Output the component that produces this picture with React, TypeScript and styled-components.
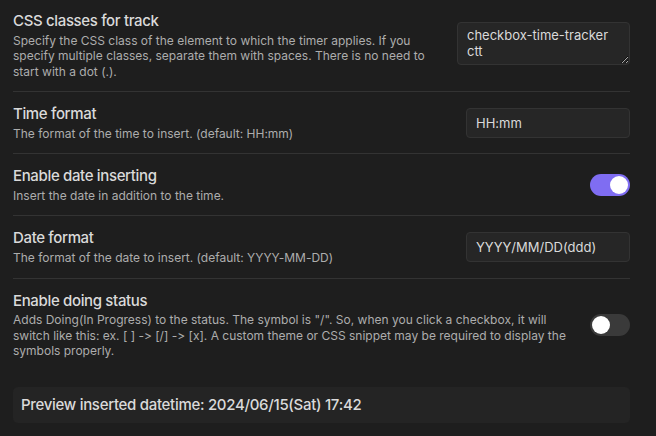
import React from "react";
import styled, { createGlobalStyle } from "styled-components";

const Global = createGlobalStyle`
  html, body { margin: 0; padding: 0; background: #1e1e1e; }
  body {
    font-family: Inter, "Noto Sans", sans-serif;
    -webkit-font-smoothing: antialiased;
    font-variant-ligatures: none;
    font-feature-settings: "calt" 0, "liga" 0;
  }
  * { box-sizing: border-box; }
`;

const Page = styled.div`
  width: 656px;
  height: 436px;
  overflow: hidden;
  background: #1e1e1e;
  padding: 0 26px 0 13px;
  color: #dadada;
`;

const Item = styled.div<{ $first?: boolean }>`
  display: flex;
  align-items: center;
  padding: ${(p) => (p.$first ? "11px 0 12px" : "12px 0")};
  border-top: ${(p) => (p.$first ? "none" : "1px solid #333333")};
`;

const Info = styled.div`
  flex: 1 1 auto;
  min-width: 0;
  margin-right: 16px;
`;

const Name = styled.div`
  font-size: 15px;
  line-height: 19.5px;
  font-weight: 500;
  letter-spacing: -0.35px;
  color: #dadada;
`;

const Desc = styled.div`
  font-size: 12px;
  line-height: 15.6px;
  padding-top: 2px;
  color: #adadad;
`;

const Control = styled.div`
  flex: 0 0 auto;
  display: flex;
  justify-content: flex-end;
`;

const TextArea = styled.textarea`
  width: 173px;
  height: 43px;
  margin-bottom: 4px;
  padding: 4px 9px;
  border: 1px solid #333333;
  border-radius: 4px;
  background: #262626;
  color: #dadada;
  font-family: Inter, "Noto Sans", sans-serif;
  font-size: 13px;
  line-height: 16.5px;
  resize: both;
  outline: none;
  overflow: hidden;
`;

const TextInput = styled.input`
  width: 164px;
  height: 30px;
  padding: 0 9px;
  border: 1px solid #333333;
  border-radius: 4px;
  background: #262626;
  color: #dadada;
  font-family: Inter, "Noto Sans", sans-serif;
  font-size: 13px;
  outline: none;
`;

const Toggle = styled.div<{ $on?: boolean }>`
  position: relative;
  width: 40px;
  height: 22px;
  border-radius: 11px;
  background: ${(p) => (p.$on ? "#7f6df2" : "#3a3a3a")};
  flex: none;
  &::after {
    content: "";
    position: absolute;
    top: 2px;
    left: ${(p) => (p.$on ? "20px" : "2px")};
    width: 18px;
    height: 18px;
    border-radius: 50%;
    background: #ffffff;
  }
`;

const Preview = styled.div`
  margin-top: 16px;
  height: 36px;
  display: flex;
  align-items: center;
  padding: 0 8px;
  background: #242424;
  border-radius: 5px;
  font-size: 15px;
  font-weight: 500;
  letter-spacing: -0.3px;
  color: #dadada;
`;

export default function App() {
  return (
    <>
      <Global />
      <Page>
        <Item $first>
          <Info>
            <Name>CSS classes for track</Name>
            <Desc>
              Specify the CSS class of the element to which the timer applies. If you specify multiple classes,
              separate them with spaces. There is no need to start with a dot (.).
            </Desc>
          </Info>
          <Control>
            <TextArea defaultValue={"checkbox-time-tracker ctt"} spellCheck={false} />
          </Control>
        </Item>
        <Item>
          <Info>
            <Name>Time format</Name>
            <Desc>The format of the time to insert. (default: HH:mm)</Desc>
          </Info>
          <Control>
            <TextInput defaultValue="HH:mm" />
          </Control>
        </Item>
        <Item>
          <Info>
            <Name>Enable date inserting</Name>
            <Desc>Insert the date in addition to the time.</Desc>
          </Info>
          <Control>
            <Toggle $on />
          </Control>
        </Item>
        <Item>
          <Info>
            <Name>Date format</Name>
            <Desc>The format of the date to insert. (default: YYYY-MM-DD)</Desc>
          </Info>
          <Control>
            <TextInput defaultValue="YYYY/MM/DD(ddd)" />
          </Control>
        </Item>
        <Item>
          <Info>
            <Name>Enable doing status</Name>
            <Desc>
              Adds Doing(In Progress) to the status. The symbol is "/". So, when you click a checkbox, it will
              switch like this: ex. [ ] -&gt; [/] -&gt; [x]. A custom theme or CSS snippet may be required to display
              the symbols properly.
            </Desc>
          </Info>
          <Control>
            <Toggle />
          </Control>
        </Item>
        <Preview>Preview inserted datetime: 2024/06/15(Sat) 17:42</Preview>
      </Page>
    </>
  );
}
